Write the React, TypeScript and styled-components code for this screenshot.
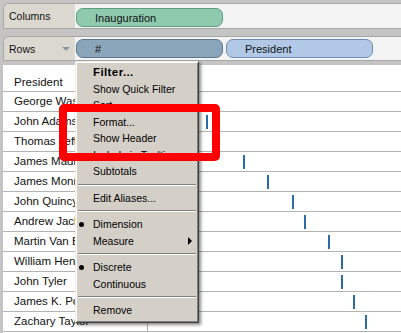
import React from 'react';
import styled, { createGlobalStyle } from 'styled-components';

const GlobalStyle = createGlobalStyle`
  html, body {
    margin: 0;
    padding: 0;
  }
  body {
    background: #c4c4c4;
    font-family: "Liberation Sans", Arial, sans-serif;
    overflow: hidden;
  }
`;

const Page = styled.div`
  position: relative;
  width: 401px;
  height: 333px;
  box-sizing: border-box;
  padding: 3px 0 0 3px;
  background: #c4c4c4;
  overflow: hidden;
  display: flex;
  flex-direction: column;
`;

const Shelf = styled.div<{ $height: number; $padTop: number; $gap: number }>`
  display: flex;
  height: ${p => p.$height}px;
  box-sizing: border-box;
  border: 1px solid #a6a6a6;
  border-right: none;
  border-radius: 6px 0 0 0;
  margin-bottom: ${p => p.$gap}px;
  background: #f3f3f3;
  overflow: hidden;

  & > div:last-child {
    padding-top: ${p => p.$padTop}px;
  }
`;

const ShelfLabel = styled.div`
  position: relative;
  width: 71px;
  flex-shrink: 0;
  display: flex;
  align-items: center;
  padding-left: 5px;
  box-sizing: border-box;
  background: #dbd8d0;
  color: #111;
  font-size: 10.5px;
`;

const DropArrow = styled.span`
  position: absolute;
  left: 58px;
  top: 50%;
  margin-top: -2px;
  width: 0;
  height: 0;
  border-left: 4px solid transparent;
  border-right: 4px solid transparent;
  border-top: 4px solid #8797a6;
`;

const DropZone = styled.div`
  flex: 1;
  display: flex;
  align-items: flex-start;
  gap: 3px;
  padding-left: 1px;
`;

const pillColors = {
  green: { bg: '#8fcaae', border: '#5b9e80' },
  slate: { bg: '#8aa4b9', border: '#5d778c' },
  blue: { bg: '#b1c8e6', border: '#6e8db3' },
};

const Pill = styled.div<{ $tone: keyof typeof pillColors }>`
  width: 147px;
  height: 19px;
  box-sizing: border-box;
  border-radius: 7px;
  background: ${p => pillColors[p.$tone].bg};
  border: 1px solid ${p => pillColors[p.$tone].border};
  padding-left: 18px;
  display: flex;
  align-items: center;
  font-size: 11px;
  color: #111;
`;

const View = styled.div`
  flex: 1;
  background: #fff;
  display: flex;
  flex-direction: column;
`;

const Row = styled.div<{ $header?: boolean }>`
  display: flex;
  height: ${p => (p.$header ? 26 : 20)}px;
  box-sizing: border-box;
  border-top: ${p => (p.$header ? 'none' : '1px solid #b3b3b3')};
  flex-shrink: 0;
`;

const RowLabel = styled.div<{ $header?: boolean }>`
  width: 145px;
  flex-shrink: 0;
  box-sizing: border-box;
  border-right: 1px solid #b3b3b3;
  padding-left: 11px;
  padding-top: ${p => (p.$header ? 9 : 0)}px;
  line-height: ${p => (p.$header ? '16px' : '19px')};
  font-size: 11.5px;
  color: #111;
  white-space: nowrap;
  overflow: hidden;
`;

const Pane = styled.div`
  position: relative;
  flex: 1;
`;

const Tick = styled.span`
  position: absolute;
  top: 3px;
  width: 2px;
  height: 14px;
  background: #2b6ca3;
`;

const EndLine = styled.div`
  border-top: 1px solid #b3b3b3;
`;

const Menu = styled.div`
  position: absolute;
  left: 75px;
  top: 61px;
  width: 124px;
  box-sizing: border-box;
  padding: 2px 0 3px;
  background: #d4d0c8;
  border: 1px solid;
  border-color: #f1efe9 #404040 #404040 #f1efe9;
  box-shadow: inset 1px 1px 0 #fff, inset -1px -1px 0 #808080,
    2px 2px 3px rgba(0, 0, 0, 0.45);
  font-size: 10.5px;
  color: #000;
`;

const MenuItem = styled.div<{ $bold?: boolean }>`
  display: flex;
  align-items: center;
  height: 16.5px;
  white-space: nowrap;
  font-weight: ${p => (p.$bold ? 700 : 400)};
  font-size: ${p => (p.$bold ? '11.5px' : '10.5px')};
  letter-spacing: ${p => (p.$bold ? '0.4px' : '0')};
`;

const Mark = styled.span`
  width: 17px;
  flex-shrink: 0;
  display: flex;
  padding-left: 3px;
  box-sizing: border-box;
`;

const Bullet = styled.span`
  width: 5px;
  height: 5px;
  border-radius: 50%;
  background: #000;
`;

const SubArrow = styled.span`
  margin-left: auto;
  margin-right: 6px;
  width: 0;
  height: 0;
  border-top: 4px solid transparent;
  border-bottom: 4px solid transparent;
  border-left: 4px solid #000;
`;

const Separator = styled.div`
  margin: 4px 2px;
  border-top: 1px solid #808080;
  border-bottom: 1px solid #fff;
`;

const Highlight = styled.div`
  position: absolute;
  left: 59px;
  top: 104px;
  width: 161px;
  height: 57px;
  box-sizing: border-box;
  border: 8px solid #ff0000;
  border-radius: 5px;
`;

const presidents: [string, number | null][] = [
  ['George Washington', 1789.33],
  ['John Adams', 1797.17],
  ['Thomas Jefferson', 1801.17],
  ['James Madison', 1809.17],
  ['James Monroe', 1817.17],
  ['John Quincy Adams', 1825.17],
  ['Andrew Jackson', 1829.17],
  ['Martin Van Buren', 1837.17],
  ['William Henry Harrison', 1841.17],
  ['John Tyler', 1841.3],
  ['James K. Polk', 1845.17],
  ['Zachary Taylor', 1849.18],
];

// pane starts at x=149 in the page; adams sits at x=207
const tickLeft = (year: number) => 207 - 149 + (year - 1797.17) * 3.06;

type Entry =
  | { kind: 'item'; label: string; bold?: boolean; bullet?: boolean; sub?: boolean }
  | { kind: 'sep' };

const menuEntries: Entry[] = [
  { kind: 'item', label: 'Filter...', bold: true },
  { kind: 'item', label: 'Show Quick Filter' },
  { kind: 'item', label: 'Sort' },
  { kind: 'item', label: 'Format...' },
  { kind: 'item', label: 'Show Header' },
  { kind: 'item', label: 'Include in Tooltip' },
  { kind: 'item', label: 'Subtotals' },
  { kind: 'sep' },
  { kind: 'item', label: 'Edit Aliases...' },
  { kind: 'sep' },
  { kind: 'item', label: 'Dimension', bullet: true },
  { kind: 'item', label: 'Measure', sub: true },
  { kind: 'sep' },
  { kind: 'item', label: 'Discrete', bullet: true },
  { kind: 'item', label: 'Continuous' },
  { kind: 'sep' },
  { kind: 'item', label: 'Remove' },
];

export default function App() {
  return (
    <Page>
      <GlobalStyle />
      <Shelf $height={26} $padTop={4} $gap={7}>
        <ShelfLabel>Columns</ShelfLabel>
        <DropZone>
          <Pill $tone="green">Inauguration</Pill>
        </DropZone>
      </Shelf>
      <Shelf $height={25} $padTop={2} $gap={4}>
        <ShelfLabel>
          Rows
          <DropArrow />
        </ShelfLabel>
        <DropZone>
          <Pill $tone="slate">#</Pill>
          <Pill $tone="blue">President</Pill>
        </DropZone>
      </Shelf>

      <View>
        <Row $header>
          <RowLabel $header>President</RowLabel>
          <Pane />
        </Row>
        {presidents.map(([name, year]) => (
          <Row key={name}>
            <RowLabel>{name}</RowLabel>
            <Pane>
              {year !== null && <Tick style={{ left: tickLeft(year) }} />}
            </Pane>
          </Row>
        ))}
        <EndLine />
      </View>

      <Menu>
        {menuEntries.map((e, i) =>
          e.kind === 'sep' ? (
            <Separator key={i} />
          ) : (
            <MenuItem key={i} $bold={e.bold}>
              <Mark>{e.bullet && <Bullet />}</Mark>
              {e.label}
              {e.sub && <SubArrow />}
            </MenuItem>
          )
        )}
      </Menu>

      <Highlight />
    </Page>
  );
}
